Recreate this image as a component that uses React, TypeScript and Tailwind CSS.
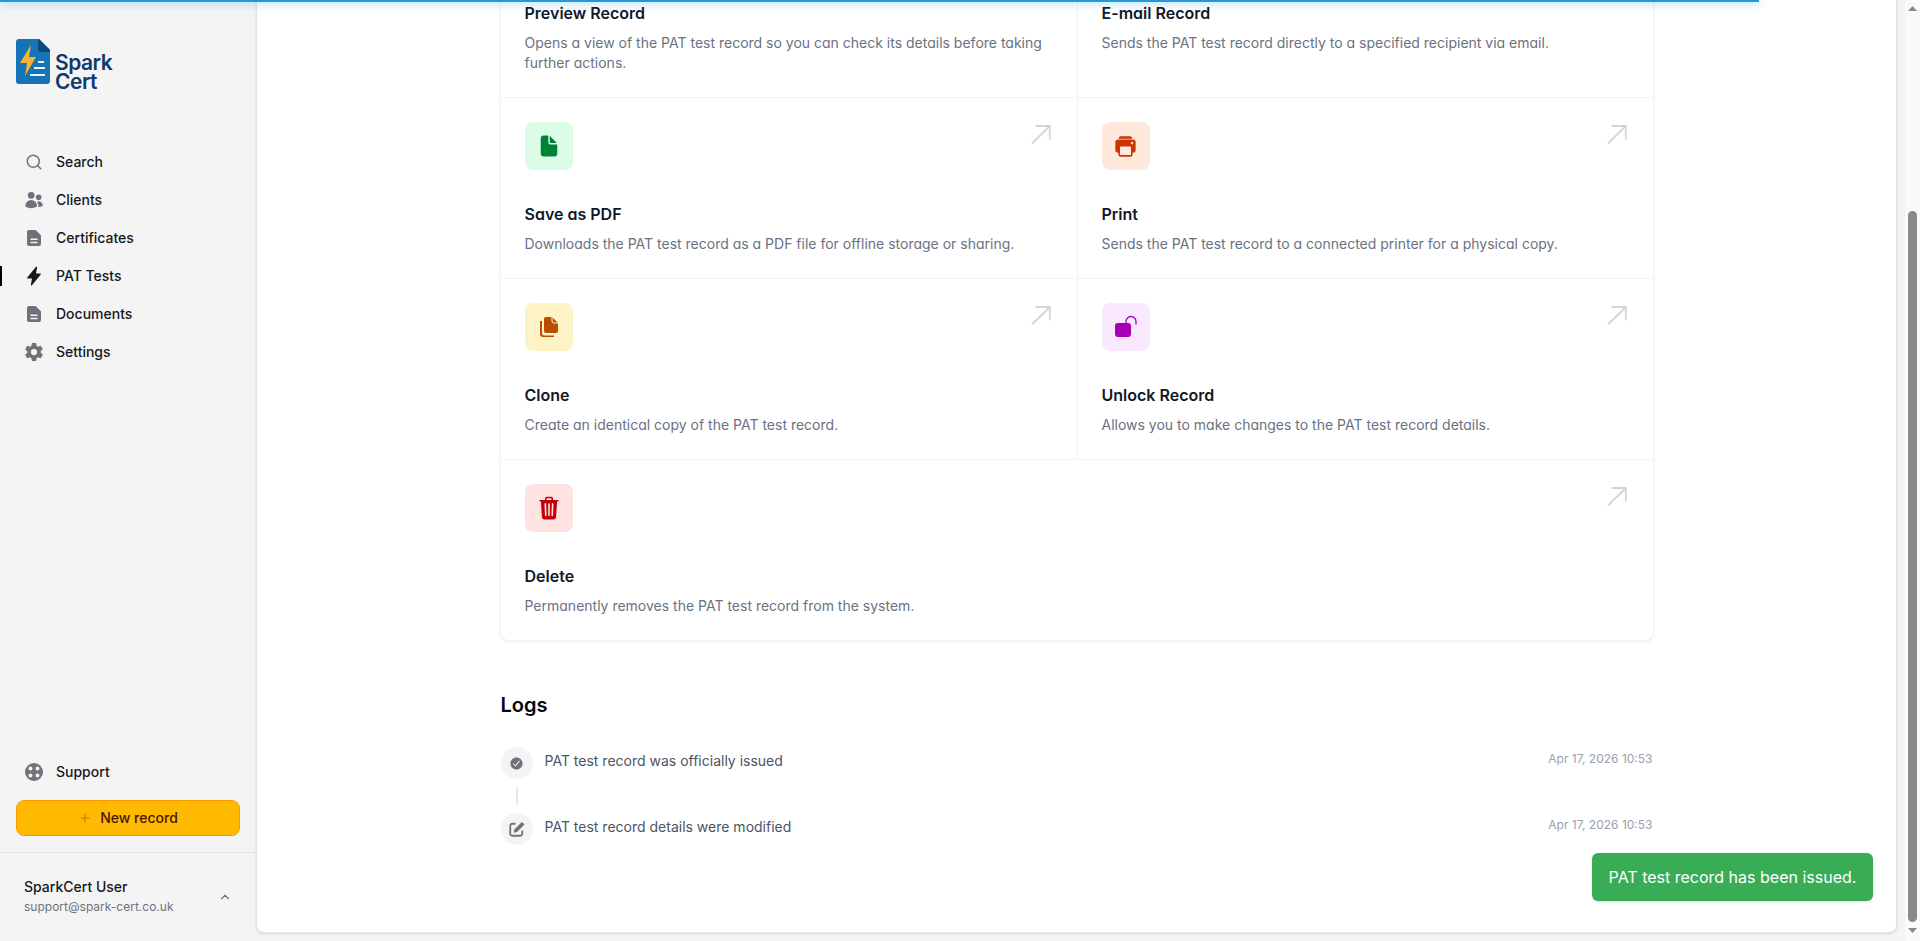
import React from 'react';
import { Search, ChevronUp, Plus } from 'lucide-react';
import { HiUsers } from 'react-icons/hi2';
import {
  IoFlash,
  IoSettingsSharp,
  IoDocument,
  IoPrint,
  IoTrash,
  IoEye,
  IoMail,
  IoCheckmarkCircle,
} from 'react-icons/io5';

// doc icon from the sidebar, two lines cut out of a filled sheet
function DocIcon() {
  return (
    <svg width="20" height="20" viewBox="0 0 20 20" fill="currentColor">
      <path
        fillRule="evenodd"
        d="M5 2h6.2a1 1 0 0 1 .7.3l4.8 4.800a1 1 0 0 1 .3.7V16a2 2 0 0 1-2 2H5a2 2 0 0 1-2-2V4a2 2 0 0 1 2-2zm1.500 8.500v1.600h7v-1.600h-7zm0 3.200v1.600h7v-1.600h-7z"
      />
    </svg>
  );
}

function BuoyIcon() {
  return (
    <svg width="20" height="20" viewBox="0 0 20 20" fill="currentColor">
      <path
        fillRule="evenodd"
        d="M10 1a9 9 0 1 1 0 18 9 9 0 0 1 0-18zM6.500 4.500a2 2 0 1 0 0 4 2 2 0 0 0 0-4zm7 0a2 2 0 1 0 0 4 2 2 0 0 0 0-4zm-7 7a2 2 0 1 0 0 4 2 2 0 0 0 0-4zm7 0a2 2 0 1 0 0 4 2 2 0 0 0 0-4z"
      />
    </svg>
  );
}

function CloneIcon() {
  return (
    <svg width="24" height="24" viewBox="0 0 24 24" fill="currentColor">
      <path d="M9 2h6l6 6v8a2 2 0 0 1-2 2H9a2 2 0 0 1-2-2V4a2 2 0 0 1 2-2z" />
      <path d="M15 2v4a2 2 0 0 0 2 2h4" fill="none" stroke="#fef3c6" strokeWidth="1" />
      <path d="M5 6v12a2.500 2.500 0 0 0 2.500 2.500H17V22H6a3 3 0 0 1-3-3V6z" />
    </svg>
  );
}

function UnlockIcon() {
  return (
    <svg width="24" height="24" viewBox="0 0 24 24" fill="currentColor">
      <rect x="1" y="8" width="16" height="14" rx="3" />
      <path d="M12 8.500V6.500a5 5 0 0 1 10 0v3" fill="none" stroke="currentColor" strokeWidth="1.300" />
    </svg>
  );
}

function EditIcon() {
  return (
    <svg width="18" height="18" viewBox="0 0 24 24" fill="currentColor">
      <path d="M10 5H5.500A2.500 2.500 0 0 0 3 7.500v11A2.500 2.500 0 0 0 5.500 21h11a2.500 2.500 0 0 0 2.500-2.500V14" fill="none" stroke="currentColor" strokeWidth="2.400" />
      <path d="M18.500 2.500 22 6 12 16l-4.500 1 1-4.500z" />
    </svg>
  );
}

function CornerArrow() {
  return (
    <svg width="20" height="19" viewBox="0 0 20 19" fill="none" stroke="#d1d5db" strokeWidth="1.800" className="mt-[3px] mr-[2px]">
      <path d="M1 18.500 18.800 1" />
      <path d="M4.500 1h14.300v13.500" />
    </svg>
  );
}

function Logo() {
  return (
    <div className="flex items-start pl-4 pt-[39px]">
      <svg width="34" height="45" viewBox="0 0 34 45">
        <path d="M3 0h20l11 11v31a3 3 0 0 1-3 3H3a3 3 0 0 1-3-3V3a3 3 0 0 1 3-3z" fill="#1573b8" />
        <path d="M22 0h1l11 11v2H25a3 3 0 0 1-3-3z" fill="#0c4a82" />
        <path d="M15 6 4 24h7l-2 13 11-19h-7z" fill="#f8b133" />
        <path d="M22 22h6v2h-6zM18 28h11v2H18zM14 35h15v2H14z" fill="#e8f2fa" />
      </svg>
      <div className="ml-[5px] mt-[14px] text-[21px] leading-[19px] font-semibold tracking-[-0.5px] text-[#0f3a6e]">
        <div>Spark</div>
        <div>Cert</div>
      </div>
    </div>
  );
}

const navItems = [
  { label: 'Search', icon: <Search size={18} strokeWidth={2} /> },
  { label: 'Clients', icon: <HiUsers size={20} /> },
  { label: 'Certificates', icon: <DocIcon /> },
  { label: 'PAT Tests', icon: <IoFlash size={20} />, active: true },
  { label: 'Documents', icon: <DocIcon /> },
  { label: 'Settings', icon: <IoSettingsSharp size={20} /> },
];

function NavItem({ label, icon, active }: { label: string; icon: React.ReactNode; active?: boolean }) {
  return (
    <div className="relative flex h-[38px] items-center gap-3 pl-6 text-sm font-medium text-zinc-900">
      {active && <span className="absolute left-0 top-[9px] h-5 w-[2px] bg-black" />}
      <span className={`flex h-5 w-5 items-center justify-center ${active ? 'text-zinc-900' : 'text-zinc-500'}`}>{icon}</span>
      {label}
    </div>
  );
}

function Sidebar() {
  return (
    <aside className="flex h-full w-[256px] shrink-0 flex-col">
      <Logo />
      <nav className="mt-[52px] flex flex-col">
        {navItems.map((item) => (
          <NavItem key={item.label} {...item} />
        ))}
      </nav>
      <div className="mt-auto">
        <NavItem label="Support" icon={<BuoyIcon />} />
        <div className="px-4 pt-[9px]">
          <button className="flex h-9 w-full items-center justify-center gap-2 rounded-lg border border-amber-500 bg-amber-400 text-sm font-medium text-amber-950">
            <Plus size={14} className="text-amber-600" />
            New record
          </button>
        </div>
        <div className="mt-4 flex h-[89px] items-start justify-between border-t border-zinc-200 pl-6 pr-6 pt-[24px]">
          <div>
            <div className="text-sm leading-5 font-medium text-zinc-900">SparkCert User</div>
            <div className="text-xs leading-5 text-zinc-500">support@spark-cert.co.uk</div>
          </div>
          <ChevronUp size={14} className="mt-[13px] text-zinc-500" />
        </div>
      </div>
    </aside>
  );
}

const actions = [
  { title: 'Preview Record', desc: 'Opens a view of the PAT test record so you can check its details before taking further actions.', icon: <IoEye size={24} />, box: 'bg-blue-100 text-blue-700' },
  { title: 'E-mail Record', desc: 'Sends the PAT test record directly to a specified recipient via email.', icon: <IoMail size={24} />, box: 'bg-sky-100 text-sky-700' },
  { title: 'Save as PDF', desc: 'Downloads the PAT test record as a PDF file for offline storage or sharing.', icon: <IoDocument size={24} />, box: 'bg-green-100 text-green-700' },
  { title: 'Print', desc: 'Sends the PAT test record to a connected printer for a physical copy.', icon: <IoPrint size={25} />, box: 'bg-[#ffe8dc] text-orange-700' },
  { title: 'Clone', desc: 'Create an identical copy of the PAT test record.', icon: <CloneIcon />, box: 'bg-amber-100 text-amber-700' },
  { title: 'Unlock Record', desc: 'Allows you to make changes to the PAT test record details.', icon: <UnlockIcon />, box: 'bg-fuchsia-100 text-fuchsia-700' },
  { title: 'Delete', desc: 'Permanently removes the PAT test record from the system.', icon: <IoTrash size={26} />, box: 'bg-red-100 text-red-700', wide: true },
];

function ActionCell({ title, desc, icon, box, wide }: { title: string; desc: string; icon: React.ReactNode; box: string; wide?: boolean }) {
  return (
    <div className={`bg-white p-6 ${wide ? 'col-span-2' : ''}`}>
      <div className="flex items-start justify-between">
        <div className={`flex h-12 w-12 items-center justify-center rounded-lg ${box}`}>{icon}</div>
        <CornerArrow />
      </div>
      <h3 className="mt-8 text-base leading-6 font-semibold text-gray-900">{title}</h3>
      <p className="mt-2 text-sm leading-5 text-gray-500">{desc}</p>
    </div>
  );
}

function LogRow({ text, time, icon, last }: { text: string; time: string; icon: React.ReactNode; last?: boolean }) {
  return (
    <div className="flex gap-3">
      <div className="flex w-8 flex-col items-center">
        <div className="flex h-8 w-8 items-center justify-center rounded-full bg-zinc-100 text-zinc-500">{icon}</div>
        {!last && <div className="my-2 h-[18px] w-[2px] bg-gray-200" />}
      </div>
      <div className="flex flex-1 items-start justify-between">
        <span className="pt-1 text-sm leading-5 text-gray-600">{text}</span>
        <span className="pt-1 text-xs leading-4 text-gray-400">{time}</span>
      </div>
    </div>
  );
}

function Scrollbar() {
  return (
    <div className="ml-2 flex h-full w-[15px] shrink-0 flex-col items-center bg-[#fafafa]">
      <svg width="9" height="5" viewBox="0 0 9 5" className="mt-[6px]" fill="#8a8a8a">
        <path d="M4.500 0 9 5H0z" />
      </svg>
      <div className="mt-[200px] h-[711px] w-[9px] rounded-full bg-[#8a8a8a]" />
      <svg width="9" height="5" viewBox="0 0 9 5" className="mt-[6px]" fill="#8a8a8a">
        <path d="M0 0h9L4.500 5z" />
      </svg>
    </div>
  );
}

export default function App() {
  return (
    <div className="relative flex h-[941px] w-full overflow-hidden bg-zinc-100 font-[Inter,sans-serif]">
      {/* page load progress */}
      <div className="absolute left-0 top-0 z-20 h-[2px] w-[1759px] bg-[#2299dd] shadow-[0_0_10px_#29d]" />

      <Sidebar />

      <div className="min-w-0 flex-1 pb-2">
        <main className="h-full overflow-hidden rounded-b-lg border-x border-b border-zinc-200 bg-white shadow-sm">
          <div className="mx-auto mt-[-103px] w-[1152px]">
            <div className="grid grid-cols-[576px_575px] gap-px overflow-hidden rounded-lg bg-gray-100 shadow-[0_1px_3px_rgba(0,0,0,0.15)] ring-1 ring-gray-100 [font-feature-settings:'cv11']">
              {actions.map((a) => (
                <ActionCell key={a.title} {...a} />
              ))}
            </div>

            <h2 className="mt-[51px] text-xl leading-7 font-semibold text-gray-950">Logs</h2>
            <div className="mt-7">
              <LogRow text="PAT test record was officially issued" time="Apr 17, 2026 10:53" icon={<IoCheckmarkCircle size={15} />} />
              <LogRow text="PAT test record details were modified" time="Apr 17, 2026 10:53" icon={<EditIcon />} last />
            </div>
          </div>
        </main>
      </div>

      <Scrollbar />

      <div className="absolute bottom-10 right-[47px] z-10 flex h-12 w-[281px] items-center justify-center rounded-md bg-[#38ad56] text-base text-white shadow-sm">
        PAT test record has been issued.
      </div>
    </div>
  );
}
